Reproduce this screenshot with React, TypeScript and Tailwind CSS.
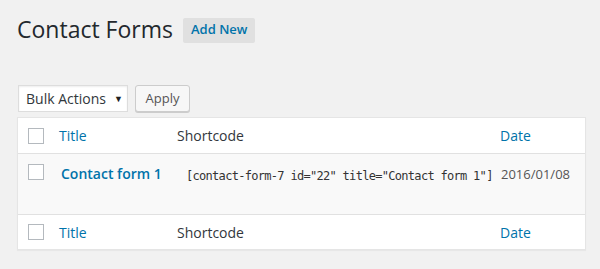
export default function App() {
  const font = { fontFamily: '"Open Sans", sans-serif' };
  return (
    <div className="w-[600px] h-[269px] bg-[#f1f1f1] text-[#444] overflow-hidden" style={font}>
      <div className="pl-[17px] pt-[15px] flex items-center">
        <h1 className="text-[23px] font-normal text-[#23282d] leading-[29px]">Contact Forms</h1>
        <span className="ml-[10px] mt-[1px] h-[25px] px-[8px] flex items-center bg-[#e0e0e0] rounded-[2px] text-[13px] font-semibold text-[#0073aa]">
          Add New
        </span>
      </div>

      <div className="ml-[18px] mt-[41px] flex items-center gap-[7px]">
        <div className="w-[110px] h-[27px] bg-white border border-[#ddd] shadow-[inset_0_1px_2px_rgba(0,0,0,0.07)] flex items-center justify-between pl-[7px] pr-[4px] text-[14px] text-[#32373c]">
          <span>Bulk Actions</span>
          <span className="text-[9px] text-[#222]">▼</span>
        </div>
        <div className="w-[55px] h-[27px] bg-[#f7f7f7] border border-[#ccc] rounded-[3px] shadow-[0_1px_0_#ccc] flex items-center justify-center text-[13px] text-[#555]">
          Apply
        </div>
      </div>

      <div className="ml-[17px] mt-[5px] w-[569px] bg-white border border-[#e5e5e5] shadow-[0_1px_1px_rgba(0,0,0,0.04)]">
        <div className="h-[36px] flex items-center border-b border-[#e1e1e1] text-[14px]">
          <span className="ml-[10px] w-[16px] h-[16px] border border-[#b4b9be] bg-white" />
          <span className="ml-[15px] w-[118px] text-[#0073aa]">Title</span>
          <span className="w-[323px] text-[#32373c]">Shortcode</span>
          <span className="text-[#0073aa]">Date</span>
        </div>
        <div className="h-[60px] bg-[#f9f9f9] flex items-baseline pt-[9px]">
          <span className="self-start ml-[10px] mt-[1px] w-[16px] h-[16px] border border-[#b4b9be] bg-white" />
          <span className="ml-[17px] w-[125px] text-[14px] font-semibold text-[#0073aa]">Contact form 1</span>
          <span
            className="w-[315px] text-[12px] tracking-[-0.7px] text-[#333] whitespace-nowrap relative top-[1px]"
            style={{ fontFamily: '"DejaVu Sans Mono", monospace' }}
          >
            [contact-form-7 id="22" title="Contact form 1"]
          </span>
          <span className="text-[13px] text-[#555]">2016/01/08</span>
        </div>
        <div className="h-[35px] flex items-center border-t border-[#e1e1e1] text-[14px]">
          <span className="ml-[10px] w-[16px] h-[16px] border border-[#b4b9be] bg-white" />
          <span className="ml-[15px] w-[118px] text-[#0073aa]">Title</span>
          <span className="w-[323px] text-[#32373c]">Shortcode</span>
          <span className="text-[#0073aa]">Date</span>
        </div>
      </div>
    </div>
  );
}
